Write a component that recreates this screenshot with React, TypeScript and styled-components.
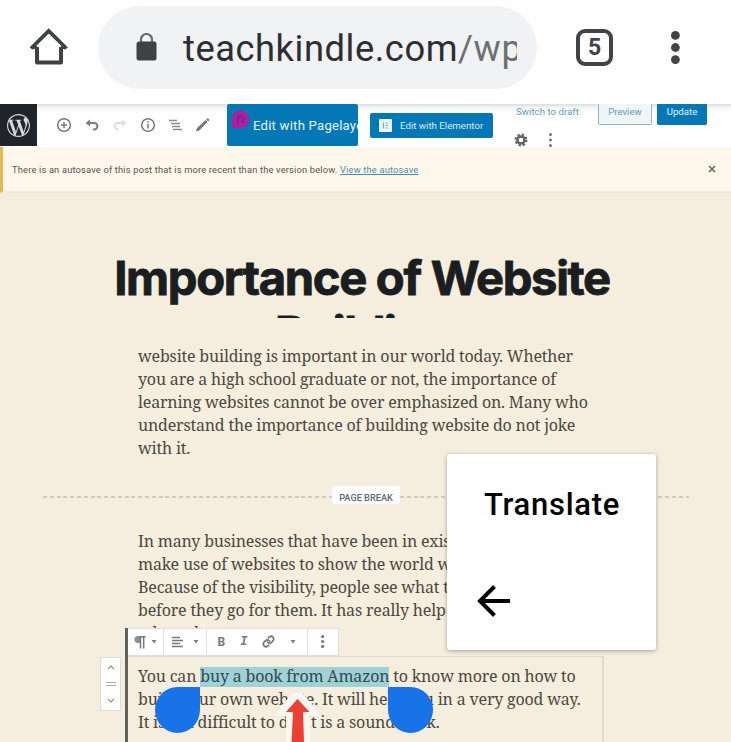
import React from "react";
import styled, { createGlobalStyle } from "styled-components";

const Global = createGlobalStyle`
  * { box-sizing: border-box; }
  body { margin: 0; background: #f5eede; overflow: hidden; }
`;

const Page = styled.div`
  position: relative;
  width: 731px;
  height: 742px;
  overflow: hidden;
  background: #f5eede;
  font-family: Roboto, "Liberation Sans", sans-serif;
`;

const BrowserBar = styled.header`
  display: flex;
  align-items: center;
  height: 104px;
  padding: 0 47px 10px 28px;
  background: #fefefe;
  svg { flex: none; }
`;

const AddressPill = styled.div`
  display: flex;
  align-items: center;
  width: 439px;
  height: 83px;
  margin: 0 39px 0 28px;
  padding: 0 20px 0 38px;
  border-radius: 42px;
  background: #f1f2f4;
`;

const Url = styled.div`
  flex: 1;
  margin: 3px 0 0 26px;
  overflow: hidden;
  white-space: nowrap;
  font-size: 36.3px;
  line-height: 50px;
  letter-spacing: 0.55px;
  color: #2c2e31;
  span { color: #6c6f73; }
`;

const TabCount = styled.div`
  display: flex;
  align-items: center;
  justify-content: center;
  width: 37px;
  height: 37px;
  margin-right: 58px;
  border: 4px solid #414346;
  border-radius: 9px;
  font-size: 23px;
  font-weight: 700;
  color: #414346;
`;

const EditorBar = styled.div`
  display: flex;
  height: 43px;
  background: linear-gradient(#dcdddf, #f7f7f8 4px, #fff 9px);
`;

const WpLogo = styled.div`
  display: flex;
  align-items: center;
  justify-content: center;
  width: 37px;
  height: 42px;
  background: #20252b;
`;

const Tools = styled.div`
  display: flex;
  align-items: center;
  gap: 12px;
  width: 190px;
  height: 42px;
  padding-left: 19px;
  svg { flex: none; }
`;

const PagelayerButton = styled.div`
  display: flex;
  align-items: center;
  width: 131px;
  height: 42px;
  padding-left: 4px;
  overflow: hidden;
  border-radius: 2px;
  background: #0478b6;
  color: #e9f5fc;
  font-size: 13.2px;
  letter-spacing: 0.2px;
  white-space: nowrap;
  svg { flex: none; margin: 0 3px 11px 0; }
`;

const ElementorButton = styled.div`
  display: flex;
  align-items: center;
  gap: 8px;
  width: 123px;
  height: 25px;
  margin: 9px 0 0 12px;
  padding-left: 9px;
  border-radius: 2px;
  background: #0478b6;
  color: #d9edf8;
  font-size: 9.7px;
  white-space: nowrap;
`;

const PublishGroup = styled.div`
  width: 215px;
  margin-left: 23px;
`;

const PublishRow = styled.div`
  display: flex;
  height: 21px;
  font-size: 9.6px;
  line-height: 16px;
`;

const DraftLink = styled.div`
  width: 82px;
  letter-spacing: 0.05px;
  color: #5b9dbb;
`;

const PublishButton = styled.div<{ $primary?: boolean }>`
  width: ${(p) => (p.$primary ? 50 : 54)}px;
  margin-right: 5px;
  border: 1px solid ${(p) => (p.$primary ? "#0478b6" : "#8fb4c8")};
  border-top: 0;
  border-radius: 0 0 2px 2px;
  background: ${(p) => (p.$primary ? "#0478b6" : "#f0f5f8")};
  color: ${(p) => (p.$primary ? "#e4f3fb" : "#5e9dbd")};
  text-align: center;
`;

const SettingsRow = styled.div`
  display: flex;
  align-items: center;
  gap: 21px;
  height: 22px;
  margin-top: 4px;
  margin-left: -2px;
  svg { margin-top: -1px; }
`;

const Notice = styled.div`
  display: flex;
  align-items: center;
  justify-content: space-between;
  height: 46px;
  padding: 0 15px 0 9px;
  border-left: 3px solid #e6b850;
  border-bottom: 2px solid #f6e9dc;
  background: #fef7ec;
  color: #56534d;
  font-size: 9.3px;
  a { color: #4a8faa; text-decoration: underline; }
`;

const Message = styled.div`
  white-space: nowrap;
  letter-spacing: 0.18px;
`;

const Title = styled.h1`
  height: 68px;
  margin: 57px 0 0 113px;
  width: 498px;
  overflow: hidden;
  font: 700 47.2px/55px Inter, sans-serif;
  letter-spacing: -1.35px;
  text-align: center;
  white-space: nowrap;
  color: #1b1e21;
  -webkit-text-stroke: 0.9px #1b1e21;
`;

const TitleLine = styled.div<{ $shift?: number }>`
  height: 55px;
  padding-left: ${(p) => p.$shift ?? 0}px;
`;

const Paragraph = styled.div<{ $top: number; $height?: number }>`
  margin: ${(p) => p.$top}px 0 0 138px;
  height: ${(p) => (p.$height ? `${p.$height}px` : "auto")};
`;

const Line = styled.div`
  height: 23.1px;
  font: 16px/23px "Noto Serif", "DejaVu Serif", serif;
  letter-spacing: -0.19px;
  white-space: nowrap;
  color: #4b4841;
`;

const PageBreak = styled.div`
  display: flex;
  align-items: center;
  width: 646px;
  height: 18px;
  margin: 25.5px 0 0 43px;
`;

const Dashes = styled.div`
  width: 289px;
  height: 2px;
  margin-top: 4px;
  background: repeating-linear-gradient(90deg, #cfccc0 0 4px, transparent 4px 6.8px);
`;

const BreakLabel = styled.div`
  width: 68px;
  height: 18px;
  border-radius: 3px;
  background: #fff;
  color: #5a6978;
  font: 500 9.2px/24px Roboto, sans-serif;
  text-align: center;
  white-space: nowrap;
`;

const Block = styled.section`
  display: flex;
  height: 114px;
  margin: 0 0 0 100px;
`;

const Mover = styled.div`
  display: flex;
  flex-direction: column;
  align-items: center;
  justify-content: space-between;
  width: 21px;
  height: 54px;
  margin: 29px 4px 0 0;
  padding: 6px 0;
  background: #fff;
  border: 1px solid #e0ddd4;
`;

const BlockBody = styled.div`
  width: 479px;
  border-left: 3px solid #62625f;
`;

const BlockToolbar = styled.div`
  display: flex;
  width: 211px;
  height: 28px;
  background: #fff;
  border: 1px solid #dedfdd;
  border-left: 0;
`;

const ToolGroup = styled.div<{ $width: number; $last?: boolean }>`
  display: flex;
  align-items: center;
  justify-content: space-around;
  width: ${(p) => p.$width}px;
  padding: 0 3px;
  border-right: ${(p) => (p.$last ? 0 : 1)}px solid #dcdee0;
`;

const Glyph = styled.span<{ $italic?: boolean }>`
  font: ${(p) => (p.$italic ? "italic" : "normal")} 700 12px Roboto, sans-serif;
  font-family: ${(p) => (p.$italic ? '"Liberation Mono", monospace' : "Roboto, sans-serif")};
  color: #74777b;
`;

const BlockText = styled.div`
  height: 86px;
  padding: 8px 0 0 10px;
  border: 1px solid #dedacc;
  border-width: 1px 2px 0 0;
`;

const Selection = styled.mark`
  display: inline-block;
  height: 20px;
  line-height: 19px;
  background: #9fd2d8;
  color: #36494a;
`;

const Handle = styled.div<{ $side: "start" | "end" }>`
  position: absolute;
  left: ${(p) => (p.$side === "start" ? 155 : 388)}px;
  top: 687px;
  width: 45px;
  height: 46px;
  border-radius: ${(p) => (p.$side === "start" ? "50% 0 50% 50%" : "0 50% 50% 50%")};
  background: #1973e8;
`;

const Pointer = styled.svg`
  position: absolute;
  left: 268px;
  top: 688px;
`;

const Menu = styled.div`
  position: absolute;
  left: 447px;
  top: 454px;
  display: flex;
  flex-direction: column;
  width: 209px;
  height: 196px;
  padding: 31px 0 0 37px;
  border-radius: 3px;
  background: #fff;
  box-shadow: 0 1px 4px rgba(60, 55, 40, 0.42);
  color: #050505;
  font-size: 31px;
  font-weight: 500;
  line-height: 40px;
  letter-spacing: 0.7px;
  svg { margin: 59px 0 0 -8px; }
`;

const Caret = () => (
  <svg width="6" height="5" viewBox="0 0 6 5"><path d="M0.5 1h5L3 4.5z" fill="#7b7e82" /></svg>
);

const Dots = ({ h, r, color }: { h: number; r: number; color: string }) => (
  <svg width={r * 2} height={h} viewBox={`0 0 ${r * 2} ${h}`} fill={color}>
    <circle cx={r} cy={r} r={r} />
    <circle cx={r} cy={h / 2} r={r} />
    <circle cx={r} cy={h - r} r={r} />
  </svg>
);

const Chevron = ({ down }: { down?: boolean }) => (
  <svg width="8" height="6" viewBox="0 0 8 6" fill="none" stroke="#8c8e8d" strokeWidth="1.1">
    <path d={down ? "M1 1l3 3 3-3" : "M1 5l3-3 3 3"} />
  </svg>
);

export default function App() {
  return (
    <Page>
      <Global />
      <BrowserBar>
        <svg width="42" height="42" viewBox="0 0 42 42" fill="none" stroke="#3f4144" strokeWidth="4">
          <path d="M9 21V36.5h24V21" strokeLinejoin="round" />
          <path d="M3 22.5L20.7 5 38.500 22.500" strokeWidth="3.800" />
          <path d="M4 21.500H9M33 21.500h4.500" strokeWidth="3" />
        </svg>
        <AddressPill>
          <svg width="21" height="28" viewBox="0 0 21 28">
            <path d="M5 11V6.500a5.500 5.500 0 0 1 11 0V11" fill="none" stroke="#696b6e" strokeWidth="2.200" />
            <rect x="0.500" y="8.500" width="20" height="19" rx="2.500" fill="#3f4144" />
          </svg>
          <Url>teachkindle.com<span>/wp</span></Url>
        </AddressPill>
        <TabCount>5</TabCount>
        <Dots h={33} r={4.4} color="#414346" />
      </BrowserBar>

      <EditorBar>
        <WpLogo>
          <svg width="23" height="23" viewBox="0 0 24 24" fill="#d6d8da">
            <path d="M21.469 6.825c.84 1.537 1.318 3.3 1.318 5.175 0 3.979-2.156 7.456-5.363 9.325l3.295-9.527c.615-1.54.82-2.771.82-3.864 0-.405-.026-.78-.07-1.11m-7.981.105c.647-.03 1.232-.105 1.232-.105.582-.075.514-.93-.067-.899 0 0-1.755.135-2.88.135-1.064 0-2.85-.15-2.85-.15-.585-.03-.661.855-.075.885 0 0 .54.061 1.125.09l1.68 4.605-2.37 7.08L5.354 6.9c.649-.03 1.234-.1 1.234-.1.585-.075.516-.93-.065-.896 0 0-1.746.138-2.874.138-.2 0-.438-.008-.69-.015C4.911 3.15 8.235 1.215 12 1.215c2.809 0 5.365 1.072 7.286 2.833-.046-.003-.091-.009-.141-.009-1.06 0-1.812.923-1.812 1.914 0 .89.513 1.643 1.06 2.531.411.72.89 1.643.89 2.977 0 .915-.354 1.994-.821 3.479l-1.075 3.585-3.9-11.61.001.014zM12 22.784c-1.059 0-2.081-.153-3.048-.437l3.237-9.406 3.315 9.087c.024.053.05.101.078.149-1.12.393-2.325.609-3.582.609M1.211 12c0-1.564.336-3.05.935-4.39L7.29 21.709C3.694 19.96 1.212 16.271 1.211 12M12 0C5.385 0 0 5.385 0 12s5.385 12 12 12 12-5.385 12-12S18.615 0 12 0" />
          </svg>
        </WpLogo>
        <Tools>
          <svg width="16" height="16" viewBox="0 0 16 16" fill="none" stroke="#75787b" strokeWidth="1.5"><circle cx="8" cy="8" r="6.3" /><path d="M8 5v6M5 8h6" /></svg>
          <svg width="16" height="16" viewBox="0 0 16 16" fill="none" stroke="#7b7e81" strokeWidth="2"><path d="M3 6h7.2a3.2 3.2 0 0 1 0 6.4H9" /><path d="M6 2.5L1.5 6 6 9.5z" fill="#7b7e81" stroke="none" /></svg>
          <svg width="16" height="16" viewBox="0 0 16 16" fill="none" stroke="#dddedf" strokeWidth="1.8"><path d="M12 6H6a3.2 3.2 0 0 0 0 6.4h1" /><path d="M10 2.5L14.5 6 10 9.5z" fill="#dddedf" stroke="none" /></svg>
          <svg width="16" height="16" viewBox="0 0 16 16" fill="none" stroke="#75787b" strokeWidth="1.5"><circle cx="8" cy="8" r="6.3" /><path d="M8 7v4.5M8 4.3v1.5" /></svg>
          <svg width="15" height="16" viewBox="0 0 15 16" stroke="#898c8f" strokeWidth="1.4"><path d="M1 3.5h8M3 6.5h9M4 9.5h8M5 12.5h9" /></svg>
          <svg width="16" height="16" viewBox="0 0 16 16" fill="#75787b"><path d="M1 14.5l1-3.5L10.6 3l2 2L4.3 13.4zM11.2 2.4l1-.9q.6-.4 1.1.1l.8.8q.4.6 0 1.1l-.9 1z" /></svg>
        </Tools>
        <PagelayerButton>
          <svg width="19" height="21" viewBox="0 0 19 21"><path d="M1 19V10A8.5 8.8 0 1 1 9.5 19z" fill="#b41c9c" /><path d="M7 15V9.5a3 3 0 1 1 3 3.5" fill="none" stroke="#682ba0" strokeWidth="2" /></svg>
          Edit with Pagelayer
        </PagelayerButton>
        <ElementorButton>
          <svg width="13" height="13" viewBox="0 0 13 13"><rect width="13" height="13" rx="1" fill="#edf6fb" /><path d="M4.5 3.5v6M6.5 4h2.5M6.5 6.5h2.5M6.5 9h2.5" stroke="#6aaed2" strokeWidth="1.2" /></svg>
          Edit with Elementor
        </ElementorButton>
        <PublishGroup>
          <PublishRow>
            <DraftLink>Switch to draft</DraftLink>
            <PublishButton>Preview</PublishButton>
            <PublishButton $primary>Update</PublishButton>
          </PublishRow>
          <SettingsRow>
            <svg width="14" height="14" viewBox="0 0 14 14" fill="none" stroke="#606367"><circle cx="7" cy="7" r="3.6" strokeWidth="2.5" /><circle cx="7" cy="7" r="5.5" strokeWidth="2" strokeDasharray="2.3 2.02" /></svg>
            <Dots h={14} r={1.5} color="#707377" />
          </SettingsRow>
        </PublishGroup>
      </EditorBar>

      <Notice>
        <Message>There is an autosave of this post that is more recent than the version below. <a>View the autosave</a></Message>
        <svg width="8" height="8" viewBox="0 0 8 8" stroke="#66645f" strokeWidth="1.5"><path d="M1 1l6 6M7 1L1 7" /></svg>
      </Notice>

      <Title>
        <TitleLine>Importance of Website</TitleLine>
        <TitleLine $shift={3}>Building</TitleLine>
      </Title>

      <Paragraph $top={27}>
        <Line>website building is important in our world today. Whether</Line>
        <Line>you are a high school graduate or not, the importance of</Line>
        <Line>learning websites cannot be over emphasized on. Many who</Line>
        <Line>understand the importance of building website do not joke</Line>
        <Line>with it.</Line>
      </Paragraph>

      <PageBreak>
        <Dashes />
        <BreakLabel>PAGE BREAK</BreakLabel>
        <Dashes />
      </PageBreak>

      <Paragraph $top={26} $height={98}>
        <Line>In many businesses that have been in existence</Line>
        <Line>make use of websites to show the world what</Line>
        <Line>Because of the visibility, people see what they</Line>
        <Line>before they go for them. It has really help</Line>
        <Line>others do not</Line>
      </Paragraph>

      <Block>
        <Mover>
          <Chevron />
          <svg width="10" height="6" viewBox="0 0 10 6" stroke="#aaaba9"><path d="M0 1.5h10M0 4.5h10" /></svg>
          <Chevron down />
        </Mover>
        <BlockBody>
          <BlockToolbar>
            <ToolGroup $width={36}>
              <svg width="12" height="14" viewBox="0 0 12 14" fill="none" stroke="#74777b" strokeWidth="1.5"><path d="M11.5 1.8H5M6.5 1.5v12M9.7 1.5v12" /><path d="M6 1H4a3.3 3.3 0 0 0 0 7h2z" fill="#8b8e91" stroke="none" /></svg>
              <Caret />
            </ToolGroup>
            <ToolGroup $width={43}>
              <svg width="12" height="12" viewBox="0 0 12 12" stroke="#777a7d" strokeWidth="1.6"><path d="M0 1.5h8M0 4.5h11M0 7.5h8M0 10.5h11" /></svg>
              <Caret />
            </ToolGroup>
            <ToolGroup $width={101}>
              <Glyph>B</Glyph>
              <Glyph $italic>I</Glyph>
              <svg width="13" height="13" viewBox="0 0 24 24" fill="none" stroke="#74777b" strokeWidth="3.2" strokeLinecap="round"><path d="M10 13a5 5 0 0 0 7.5.5l3-3a5 5 0 0 0-7-7l-1.7 1.7M14 11a5 5 0 0 0-7.5-.5l-3 3a5 5 0 0 0 7 7l1.7-1.7" /></svg>
              <Caret />
            </ToolGroup>
            <ToolGroup $width={30} $last>
              <Dots h={13} r={1.6} color="#77797d" />
            </ToolGroup>
          </BlockToolbar>
          <BlockText>
            <Line>You can <Selection>buy a book from Amazon</Selection> to know more on how to</Line>
            <Line>build your own website. It will help you in a very good way.</Line>
            <Line>It is not difficult to do. It is a sound book.</Line>
          </BlockText>
        </BlockBody>
      </Block>

      <Handle $side="start" />
      <Handle $side="end" />
      <Pointer width="60" height="54" viewBox="0 0 60 54">
        <path d="M29.5 4q4 0 8 4.500L53 28H42.500v26H18V28H6L21.500 8.500q4-4.500 8-4.500z" fill="#f9f7f1" />
        <path d="M29.5 11L41.500 24H35L36 54H23.500L25 24H18z" fill="#ee3f35" />
      </Pointer>
      <Menu>
        Translate
        <svg width="36" height="34" viewBox="0 0 36 34" fill="none" stroke="#050505" strokeWidth="4"><path d="M34 17H5M18.500 2.500L4 17l14.500 14.500" /></svg>
      </Menu>
    </Page>
  );
}
